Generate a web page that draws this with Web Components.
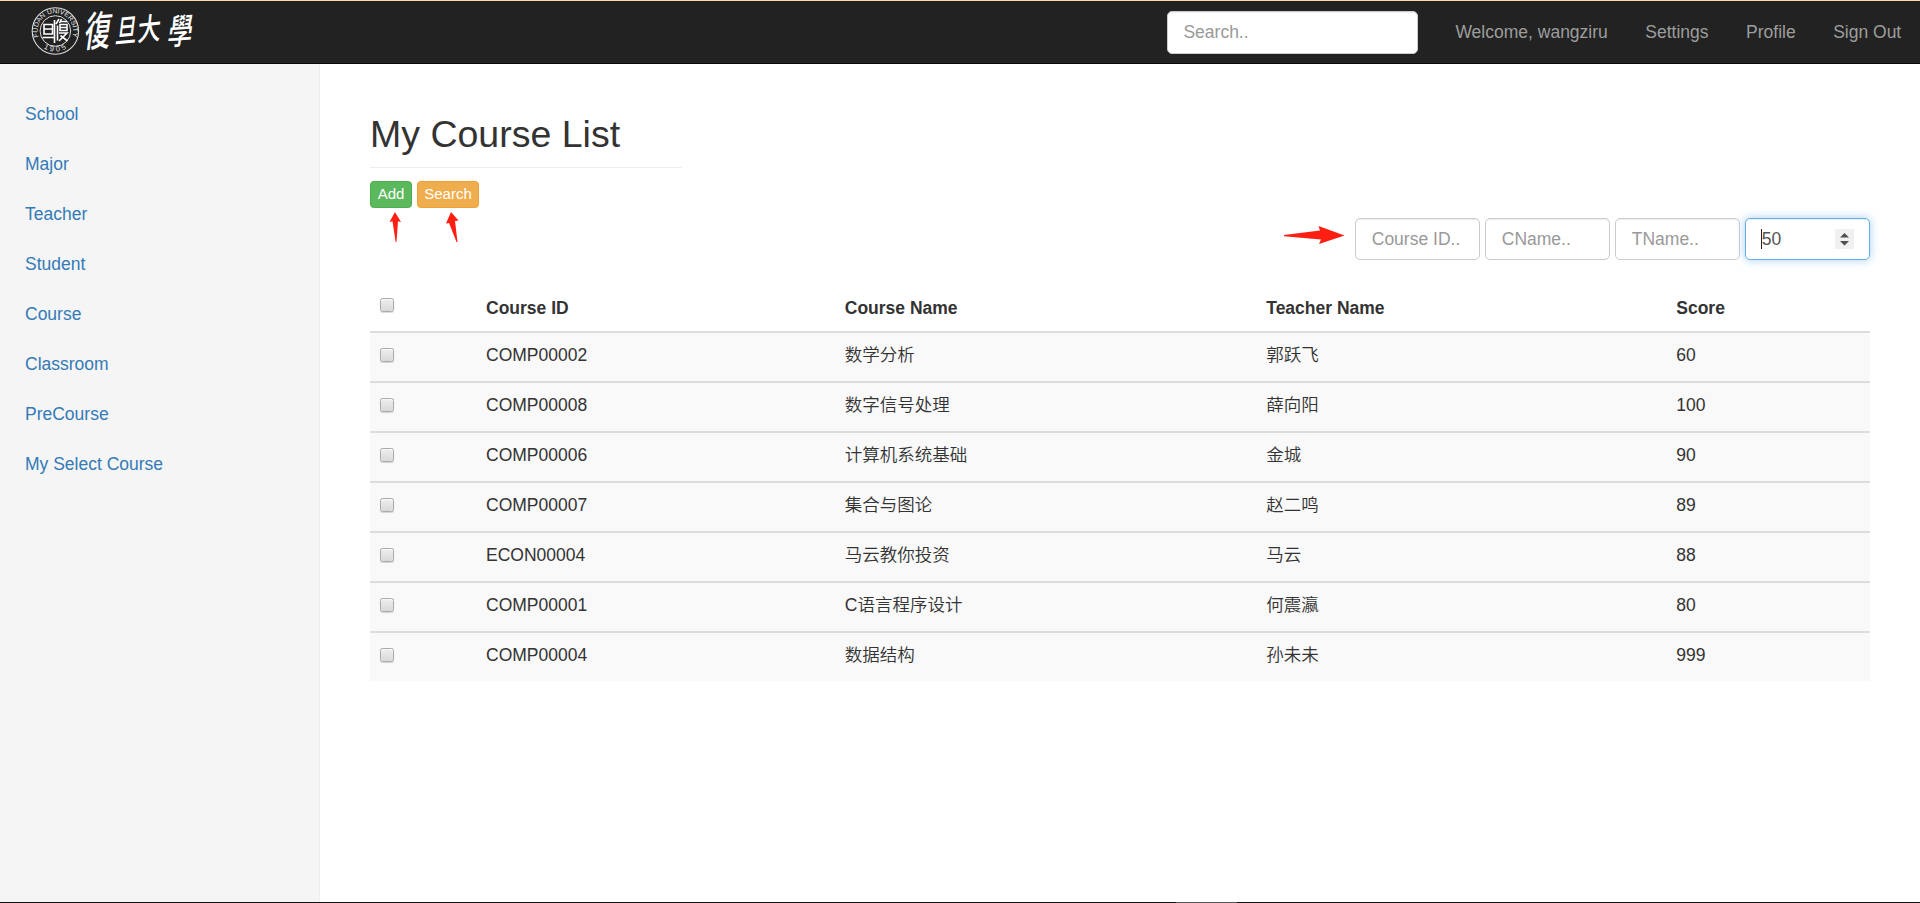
<!DOCTYPE html>
<html lang="en">
<head>
<meta charset="utf-8">
<title>My Course List</title>
<style>
html,body{margin:0;height:100%;overflow:hidden}
body{font-family:"Liberation Sans","Noto Sans CJK SC",sans-serif;font-size:17.5px;line-height:25px;color:#333;background:#fff}
</style>
</head>
<body>
<course-app></course-app>
<script>
const define=(name,html,init)=>customElements.define(name,class extends HTMLElement{
  constructor(){
    super();
    const t=document.createElement('template');
    t.innerHTML=html;
    this.attachShadow({mode:'open'}).append(t.content.cloneNode(true));
  }
  connectedCallback(){ if(init) init(this,this.shadowRoot); }
});

define('fudan-logo',`<style>
:host{display:block;width:200px;height:62px}
svg{display:block;overflow:visible}
text{fill:#fff;font-family:"Noto Sans CJK TC",sans-serif}
.ring text{font-family:"Liberation Sans",sans-serif;fill:#e6e6e6}
</style>
<svg width="200" height="62" viewBox="0 1 200 62">
  <defs>
    <path id="top" d="M38.900 37.700A17.800 17.800 0 1 1 71.900 37.700"/>
    <path id="bot" d="M37 40.500A20.800 20.800 0 0 0 73.800 40.500"/>
  </defs>
  <g class="ring">
    <circle cx="55.400" cy="31" r="23.200" fill="none" stroke="#ddd" stroke-width="1.100"/>
    <circle cx="55.400" cy="31" r="15.300" fill="none" stroke="#ddd" stroke-width="1"/>
    <text font-size="6.600"><textPath href="#top" startOffset="1" textLength="67" lengthAdjust="spacingAndGlyphs">FUDAN UNIVERSITY</textPath></text>
    <text font-size="7.500" letter-spacing="2.500"><textPath href="#bot" startOffset="10">1905</textPath></text>
  </g>
  <g fill="none" stroke="#fff" stroke-width="1.600">
    <path d="M44 24.500h8.500v9.500h-8.500zM44 29h8.500M42.500 37.500h11.500M54.500 20v23M59 19l-3 5M57.500 25.500v15"/>
    <path d="M60 21.500h7M60 24.500h7v6h-7zM60 27.500h7M59 33h8l-8 8M60.500 35.500l7 5.500M61.500 19l-2 4"/>
  </g>
  <g font-weight="500">
    <text transform="translate(83 47) rotate(-4) skewX(-12) scale(.7 1.080)" font-size="38">復</text>
    <text transform="translate(114.500 43) rotate(-5) skewX(-12) scale(.72 1.050)" font-size="30">旦</text>
    <text transform="translate(137 41) rotate(-6) skewX(-10) scale(.78 1)" font-size="30">大</text>
    <text transform="translate(166.500 45) rotate(-4) skewX(-12) scale(.71 1)" font-size="35">學</text>
  </g>
</svg>`);

define('text-field',`<style>
:host{display:block;width:125px;height:42px}
.f{box-sizing:border-box;width:100%;height:100%;display:flex;align-items:center;justify-content:space-between;padding:0 15px 0 15.750px;border:1px solid #ccc;border-radius:5px;background:#fff;color:#999;box-shadow:inset 0 1px 1px rgba(0,0,0,.075);white-space:nowrap}
:host([focused]) .f{border-color:#66afe9;color:#555;padding-left:15px;box-shadow:inset 0 1px 1px rgba(0,0,0,.075),0 0 10px rgba(102,175,233,.6)}
.v{display:flex;align-items:center}
.caret,.spin{display:none}
:host([focused]) .caret{display:block;width:1px;height:20px;margin-right:-.25px;background:#222}
:host([focused]) .spin{display:block;width:19px;height:20px;background:#f0f0f0}
svg{display:block}
</style>
<div class="f"><div class="v"><i class="caret"></i><slot></slot></div>
<div class="spin"><svg width="19" height="20"><path d="M5 8.500L9.500 4L14 8.500zM5 12h9L9.500 16.500z" fill="#505050"/></svg></div></div>`);

define('top-bar',`<style>
:host{display:flex;box-sizing:border-box;height:64px;border-top:1px solid #fbd9ac;border-bottom:1px solid #080808;background:#222;color:#9d9d9d;justify-content:space-between}
.r{display:flex;align-items:flex-start}
text-field{width:251px;height:43px;margin:10px 19px 0 0}
a{padding:19px 18.75px 0;white-space:nowrap}
</style>
<fudan-logo></fudan-logo>
<div class="r"><text-field>Search..</text-field><a>Welcome, wangziru</a><a>Settings</a><a>Profile</a><a>Sign Out</a></div>`);

define('side-nav',`<style>
:host{display:flex;flex-direction:column;box-sizing:border-box;width:320px;flex:none;padding:25px 0;background:#f5f5f5;border-right:1px solid #eee}
a{display:block;box-sizing:border-box;height:50px;padding:12.5px 25px;color:#337ab7}
</style>`,(h,r)=>{
  for(const s of ['School','Major','Teacher','Student','Course','Classroom','PreCourse','My Select Course']){
    const a=document.createElement('a');a.textContent=s;r.append(a);
  }
});

define('action-button',`<style>
:host{display:block;box-sizing:border-box;height:27px;border:1px solid #4cae4c;border-radius:3.75px;background:#5cb85c;color:#fff;font-size:15px;line-height:24px;text-align:center;width:42px}
:host([warning]){background:#f0ad4e;border-color:#eea236;width:62px}
</style><slot></slot>`);

define('red-arrow',`<style>:host{display:block}svg{display:block}</style><svg fill="#ff1e12"><path/></svg>`,(h,r)=>{
  const s=r.querySelector('svg');
  s.setAttribute('width',h.getAttribute('w'));s.setAttribute('height',h.getAttribute('h'));
  r.querySelector('path').setAttribute('d',h.getAttribute('d'));
});

define('check-box',`<style>
:host{display:block;box-sizing:border-box;width:14px;height:14px;border:1px solid #aaa;border-radius:2.500px;background:linear-gradient(#eee,#d9d9d9);box-shadow:0 1px 1px rgba(0,0,0,.15),inset 0 1px 1px rgba(255,255,255,.6)}
</style>`);

define('course-row',`<style>
:host{display:grid;grid-template-columns:106px 358.750px 421.500px 410px 1fr;box-sizing:border-box;height:50px;padding:10px 10px 0;border-top:2px solid #ddd;background:#f9f9f9}
check-box{margin-top:5px}
:host([head]){height:46px;padding-top:8px;border:0;background:none;font-weight:700}
:host([head]) check-box{margin-top:5px}
:host([head]) span{padding-top:3px}
</style><check-box></check-box>`,(h,r)=>{
  for(const s of h.getAttribute('values').split('|')){
    const e=document.createElement('span');e.textContent=s;r.append(e);
  }
});

define('course-table',`<style>:host{display:block;font-weight:350}</style>
<course-row head values="Course ID|Course Name|Teacher Name|Score"></course-row>
<course-row values="COMP00002|数学分析|郭跃飞|60"></course-row>
<course-row values="COMP00008|数字信号处理|薛向阳|100"></course-row>
<course-row values="COMP00006|计算机系统基础|金城|90"></course-row>
<course-row values="COMP00007|集合与图论|赵二鸣|89"></course-row>
<course-row values="ECON00004|马云教你投资|马云|88"></course-row>
<course-row values="COMP00001|C语言程序设计|何震瀛|80"></course-row>
<course-row values="COMP00004|数据结构|孙未未|999"></course-row>`);

define('course-app',`<style>
:host{display:flex;flex-direction:column;height:903px}
.body{display:flex;flex:1;min-height:0}
.edge{height:1px;flex:none;background:linear-gradient(90deg,#111 1176px,#555 1176px,#555 1237px,#111 1237px)}
main{flex:1;padding:45px 50px 0}
h1{margin:0;width:312px;height:58px;border-bottom:1px solid #eee;font-size:37.500px;line-height:50px;font-weight:400;white-space:nowrap}
.buttons{display:flex;gap:5px;margin-top:13px}
.marks{display:flex;height:6px;padding-left:18.500px;gap:44px;margin-top:4px}
.filters{display:flex;justify-content:flex-end;gap:5px}
.filters red-arrow{margin:7px 5px 0 0}
course-table{margin-top:25px}
</style>
<top-bar></top-bar>
<div class="body"><side-nav></side-nav>
<main>
<h1>My Course List</h1>
<div class="buttons"><action-button>Add</action-button><action-button warning>Search</action-button></div>
<div class="marks"><red-arrow w="13" h="31" d="M6 0L12 10L9 9.300L7.500 30H6.700L3.500 9.300L0.500 10z"></red-arrow><red-arrow w="14" h="31" d="M5 0L12.500 8.500L9 9L11.500 30H10.500L3 11L0 11.500z"></red-arrow></div>
<div class="filters"><red-arrow w="62" h="20" d="M1 10L37 5.500L35.500 1L61.500 10.500L36 19L38 14.500L1 11.300z"></red-arrow><text-field>Course ID..</text-field><text-field>CName..</text-field><text-field>TName..</text-field><text-field focused>50</text-field></div>
<course-table></course-table>
</main></div>
<div class="edge"></div>`);
</script>
</body>
</html>
